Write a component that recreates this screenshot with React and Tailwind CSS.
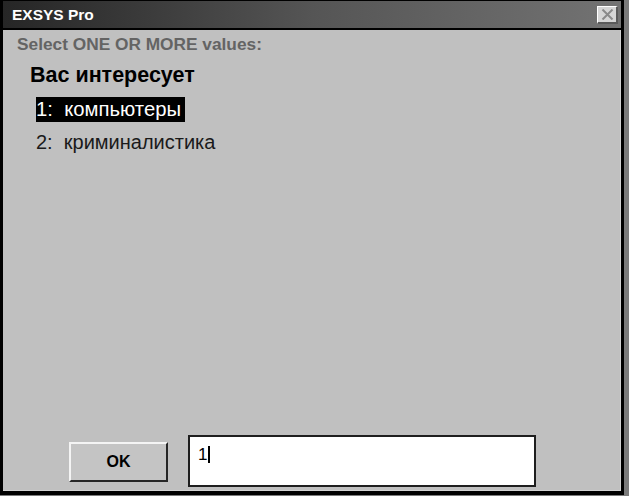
import React from 'react';

const font = { fontFamily: '"Liberation Sans", Arial, sans-serif' };

const CloseBox = () => (
    <div className="mr-[3px] w-[21px] h-[18px] bg-[#d6d6d6] border-t border-l border-t-white border-l-white border-b-2 border-r-2 border-b-[#5a5a5a] border-r-[#5a5a5a] flex items-center justify-center">
        <svg width="13" height="11" viewBox="0 0 13 11">
            <path d="M1.5 0.5 L11.5 10.5 M11.5 0.5 L1.5 10.5" stroke="#8a8a8a" strokeWidth="2" fill="none" />
        </svg>
    </div>
);

const App = () => {
    const [value, setValue] = React.useState('1');

    return (
        <div className="w-[629px] h-[496px] bg-[#7b7b7b] overflow-hidden" style={font}>
            <div className="w-[624px] h-[495px] border-x-[3px] border-t border-b-[4px] border-black flex flex-col">
                {/* title bar */}
                <div className="h-[27px] shrink-0 flex items-center justify-between bg-gradient-to-r from-[#262626] via-[#555555] to-[#737373]">
                    <span className="pl-[9px] text-white font-bold text-[15.5px] leading-none">EXSYS Pro</span>
                    <CloseBox />
                </div>
                <div className="h-[2px] shrink-0 bg-black" />

                {/* body */}
                <div className="flex-1 bg-[#c0c0c0] flex flex-col border-r border-b border-[#d2d2d2]">
                    <div className="mt-[6px] pl-[14px] text-[17.3px] leading-[17px] font-bold text-[#646464]">
                        Select ONE OR MORE values:
                    </div>
                    <div className="mt-[12px] pl-[27px] text-[21.5px] leading-[21px] font-bold text-black">
                        Вас интересует
                    </div>
                    <div className="mt-[11px] pl-[33px] flex">
                        <span className="h-[25px] leading-[25px] text-[20.3px] bg-black text-white whitespace-pre pr-[4px]">1:  компьютеры</span>
                    </div>
                    <div className="mt-[8px] pl-[33px] flex">
                        <span className="h-[25px] leading-[25px] text-[20px] text-[#1a1a1a] whitespace-pre">2:  криминалистика</span>
                    </div>

                    <div className="flex-1" />

                    <div className="flex items-start pb-[3px]">
                        <button className="ml-[66px] mt-[7px] w-[99px] h-[40px] bg-[#c4c4c4] border-t-2 border-l-2 border-t-[#f4f4f4] border-l-[#f4f4f4] border-b-2 border-r-2 border-b-[#262626] border-r-[#262626] font-bold text-[16px] text-black">
                            OK
                        </button>
                        <div className="ml-[20px] w-[348px] h-[52px] bg-white border-2 border-[#1e1e1e] flex items-start pl-[8px] pt-[9px]">
                            <span className="text-[17px] leading-[17px] text-black">{value}</span>
                            <span className="ml-[1px] w-[2px] h-[17px] bg-black" />
                        </div>
                    </div>
                </div>
            </div>
        </div>
    );
};

export default App;
